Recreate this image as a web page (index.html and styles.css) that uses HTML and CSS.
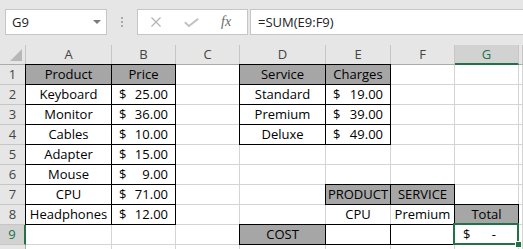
FILE: index.html
```html
<!DOCTYPE html>
<html>
  <head>
    <title>Sheet</title>
    <link rel="stylesheet" href="styles.css">
    <meta charset="utf-8">
  </head>
  <body>
    <div class="toolbar">
      <div class="namebox"><span>G9</span><span class="caret"></span></div>
      <div class="grip"><span></span><span></span><span></span></div>
      <div class="fxbox">
        <svg class="ico-x" width="12" height="10" viewBox="0 0 12 10"><path d="M1.5 0.5 L10.5 9.5 M10.5 0.5 L1.5 9.5" stroke="#b3b3b3" stroke-width="1.2" fill="none"/></svg>
        <svg class="ico-ok" width="15" height="9" viewBox="0 0 15 9"><path d="M0.8 4.2 L5 8 L14.2 0.8" stroke="#c2c2c2" stroke-width="2" fill="none"/></svg>
        <span class="fx">fx</span>
      </div>
      <div class="formula">=SUM(E9:F9)</div>
    </div>

    <div class="sheet">
      <div class="c hd corner"><svg width="26" height="19" viewBox="0 0 26 19"><polygon points="22,4 22,16 10,16" fill="#b7b7b7"/></svg></div>
      <div class="c hd">A</div><div class="c hd">B</div><div class="c hd">C</div><div class="c hd">D</div>
      <div class="c hd">E</div><div class="c hd">F</div><div class="c hd on">G</div><div class="c hd"></div>

      <div class="c rh">1</div>
      <div class="c b f">Product</div><div class="c b f">Price</div><div class="c"></div>
      <div class="c b f">Service</div><div class="c b f">Charges</div><div class="c"></div><div class="c"></div><div class="c"></div>

      <div class="c rh">2</div>
      <div class="c b">Keyboard</div><div class="c b acct"><span>$</span><span>25.00</span></div><div class="c"></div>
      <div class="c b">Standard</div><div class="c b acct"><span>$</span><span>19.00</span></div><div class="c"></div><div class="c"></div><div class="c"></div>

      <div class="c rh">3</div>
      <div class="c b">Monitor</div><div class="c b acct"><span>$</span><span>36.00</span></div><div class="c"></div>
      <div class="c b">Premium</div><div class="c b acct"><span>$</span><span>39.00</span></div><div class="c"></div><div class="c"></div><div class="c"></div>

      <div class="c rh">4</div>
      <div class="c b">Cables</div><div class="c b acct"><span>$</span><span>10.00</span></div><div class="c"></div>
      <div class="c b">Deluxe</div><div class="c b acct"><span>$</span><span>49.00</span></div><div class="c"></div><div class="c"></div><div class="c"></div>

      <div class="c rh">5</div>
      <div class="c b">Adapter</div><div class="c b acct"><span>$</span><span>15.00</span></div><div class="c"></div>
      <div class="c"></div><div class="c"></div><div class="c"></div><div class="c"></div><div class="c"></div>

      <div class="c rh">6</div>
      <div class="c b">Mouse</div><div class="c b acct"><span>$</span><span>9.00</span></div><div class="c"></div>
      <div class="c"></div><div class="c"></div><div class="c"></div><div class="c"></div><div class="c"></div>

      <div class="c rh">7</div>
      <div class="c b">CPU</div><div class="c b acct"><span>$</span><span>71.00</span></div><div class="c"></div>
      <div class="c"></div><div class="c b f">PRODUCT</div><div class="c b f">SERVICE</div><div class="c"></div><div class="c"></div>

      <div class="c rh">8</div>
      <div class="c b">Headphones</div><div class="c b acct"><span>$</span><span>12.00</span></div><div class="c"></div>
      <div class="c"></div><div class="c">CPU</div><div class="c">Premium</div><div class="c b f">Total</div><div class="c"></div>

      <div class="c rh on">9</div>
      <div class="c"></div><div class="c"></div><div class="c"></div>
      <div class="c b f">COST</div><div class="c b"></div><div class="c b"></div>
      <div class="c acct sel"><span>$</span><span>-</span><span class="handle"></span></div><div class="c"></div>

      <div class="c rh"></div>
      <div class="c"></div><div class="c"></div><div class="c"></div><div class="c"></div>
      <div class="c"></div><div class="c"></div><div class="c"></div><div class="c"></div>
    </div>
  </body>
</html>
```

FILE: styles.css
```css
* {
  box-sizing: border-box;
}
body {
  margin: 0;
  background: #e6e6e6;
  font-family: "Open Sans", "Liberation Sans", sans-serif;
  font-size: 13px;
  color: #000;
  overflow: hidden;
}

/* formula bar */
.toolbar {
  height: 45px;
  padding-top: 9px;
  display: flex;
  align-items: flex-start;
}
.namebox {
  margin-left: 5px;
  width: 102px;
  height: 26px;
  border: 1px solid #c6c6c6;
  background: #fff;
  display: flex;
  align-items: center;
  justify-content: space-between;
  padding: 0 5px 0 6px;
  color: #222;
}
.caret {
  width: 0;
  height: 0;
  border-left: 4px solid transparent;
  border-right: 4px solid transparent;
  border-top: 4px solid #7a7a7a;
}
.grip {
  width: 30px;
  height: 26px;
  padding-top: 8px;
  display: flex;
  flex-direction: column;
  align-items: center;
  gap: 2px;
}
.grip span {
  width: 2px;
  height: 2px;
  background: #a8a8a8;
}
.fxbox {
  width: 111px;
  height: 26px;
  border: 1px solid #c6c6c6;
  background: #fff;
  display: flex;
  align-items: center;
}
.ico-x {
  margin-left: 12px;
}
.ico-ok {
  margin-left: 22px;
}
.fx {
  margin-left: 22px;
  font-family: "Liberation Serif", serif;
  font-style: italic;
  font-size: 14px;
  color: #6a6a6a;
}
.formula {
  flex: 1;
  margin-left: 2px;
  height: 26px;
  border: 1px solid #c6c6c6;
  border-right: none;
  background: #fff;
  padding-left: 7px;
  display: flex;
  align-items: center;
  color: #222;
}

/* grid */
.sheet {
  display: grid;
  grid-template-columns: 26px 86px 64px 64px 86px 65px 64px 64px 1fr;
  grid-auto-rows: 20px;
  height: 204px;
  overflow: hidden;
}
.c {
  background: #fff;
  border-right: 1px solid #d4d4d4;
  border-bottom: 1px solid #d4d4d4;
  line-height: 19px;
  text-align: center;
  white-space: nowrap;
}
.hd {
  background: #e6e6e6;
  border-right-color: #c6c6c6;
  border-bottom-color: #ababab;
  color: #444;
}
.corner svg {
  display: block;
}
.rh {
  background: #e6e6e6;
  border-right-color: #ababab;
  border-bottom-color: #c6c6c6;
  color: #444;
}
.hd.on {
  background: #d2d2d2;
  color: #217346;
  border-bottom: 2px solid #217346;
}
.rh.on {
  background: #d2d2d2;
  color: #217346;
  border-right: 2px solid #217346;
}
.b {
  border-right-color: #000;
  border-bottom-color: #000;
  box-shadow: -1px -1px #000, -1px 0 #000, 0 -1px #000;
}
.f {
  background: #a6a6a6;
}
.acct {
  display: flex;
  justify-content: space-between;
  padding: 0 7px;
}
.sel {
  position: relative;
  padding: 0 22px 0 8px;
}
.sel::after {
  content: "";
  position: absolute;
  left: -2px;
  top: -2px;
  right: -1px;
  bottom: -1px;
  border: 2px solid #217346;
}
.handle {
  position: absolute;
  right: -4px;
  bottom: -4px;
  width: 7px;
  height: 7px;
  background: #217346;
  border: 1px solid #fff;
  z-index: 1;
}
```
